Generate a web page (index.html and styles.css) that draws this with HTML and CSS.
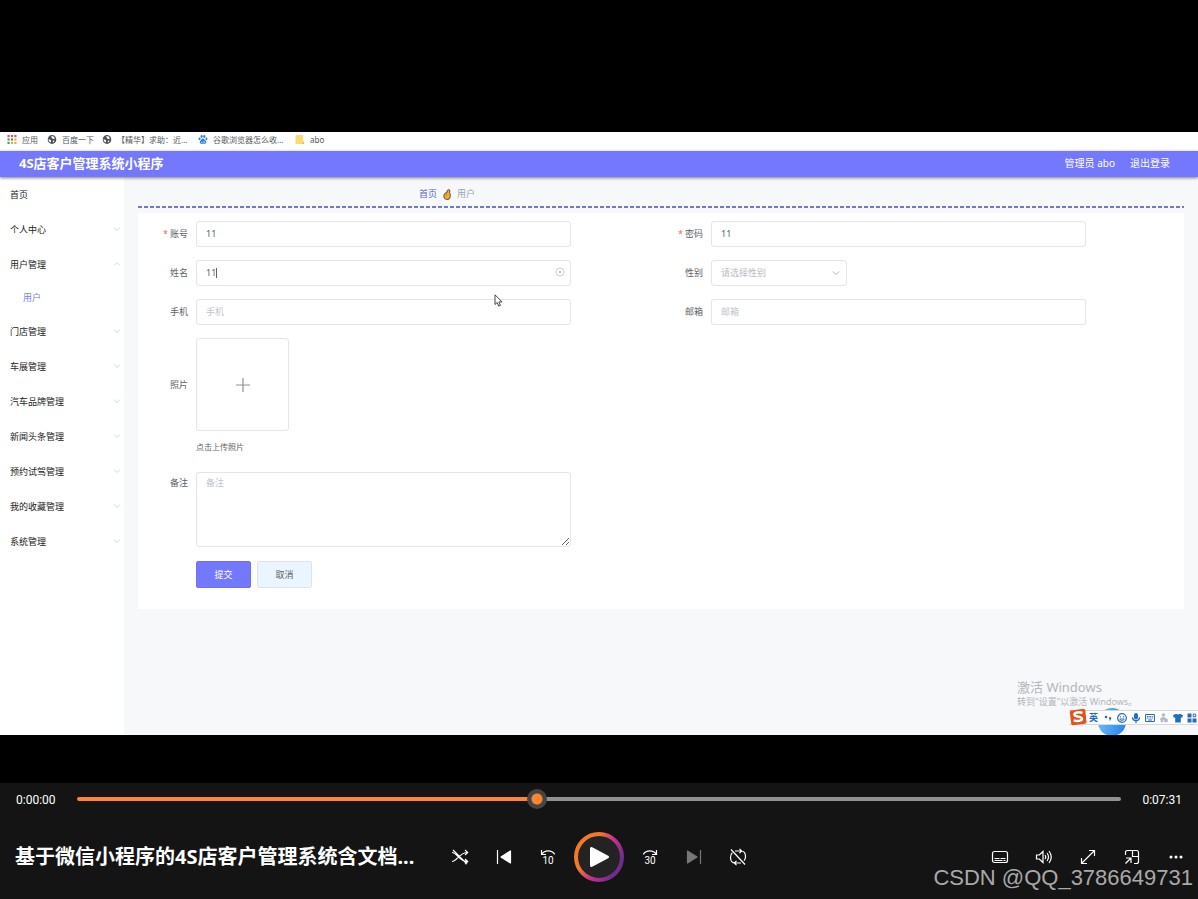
FILE: index.html
```html
<!DOCTYPE html>
<html lang="zh-CN">
<head>
<meta charset="utf-8">
<meta name="viewport" content="width=device-width, initial-scale=1">
<title>4S店客户管理系统小程序</title>
<link rel="stylesheet" href="styles.css">
</head>
<body>
<svg class="defs" width="0" height="0" aria-hidden="true">
  <symbol id="down" viewBox="0 0 8 8"><path d="M1 2.5l3 3 3-3" fill="none" stroke="currentColor"/></symbol>
  <symbol id="up" viewBox="0 0 8 8"><path d="M1 5.5l3-3 3 3" fill="none" stroke="currentColor"/></symbol>
  <symbol id="globe" viewBox="0 0 10 10"><circle cx="5" cy="5" r="4.900" fill="#4d5156"/><path d="M1.200 4.600l2 .8.8 1-.4 1.800C2.200 7.800 1.200 6.500 1.200 4.600zM4 1.500l2.400-.2L8.300 3.600l-1.500.8L5.200 3.800z" fill="#fff"/><path d="M6 6.500l1.800-.4-.5 1.500L6 8.200z" fill="#fff"/></symbol>
</svg>
<main class="stage">
  <div class="screen">
    <nav class="bookmarks" aria-label="书签">
      <a class="mark" href="#"><svg viewBox="0 0 10 10"><g fill="#e25545"><path d="M0 0h2.400v2.400H0zM3.800 0h2.400v2.400H3.800zM7.600 0H10v2.400H7.600z"/></g><path d="M0 3.800h2.400v2.400H0z" fill="#4a9b57"/><path d="M3.800 3.800h2.400v2.400H3.800z" fill="#4a7fd6"/><path d="M7.600 3.800H10v2.400H7.600zM3.800 7.600h2.400V10H3.800zM7.600 7.600H10V10H7.600z" fill="#e6ac37"/><path d="M0 7.600h2.400V10H0z" fill="#4a9b57"/></svg>应用</a>
      <a class="mark" href="#"><svg viewBox="0 0 10 10"><use href="#globe"/></svg>百度一下</a>
      <a class="mark" href="#"><svg viewBox="0 0 10 10"><use href="#globe"/></svg>【精华】求助：近...</a>
      <a class="mark" href="#"><svg viewBox="0 0 10 10" fill="#2f7fe0"><ellipse cx="3.500" cy="1.700" rx="1.200" ry="1.600"/><ellipse cx="6.500" cy="1.700" rx="1.200" ry="1.600"/><ellipse cx="1.200" cy="4.200" rx="1.100" ry="1.500"/><ellipse cx="8.800" cy="4.200" rx="1.100" ry="1.500"/><path d="M5 3.800C3.500 3.800 3.300 5.300 2 6.300 1 7.300 1.300 9.600 3 9.700h4c1.700-.1 2-2.400 1-3.400C6.700 5.300 6.500 3.800 5 3.800z"/><path d="M3.200 7.500h1v1h-1zM5.600 7h1.200v1.500H5.600z" fill="#fff"/></svg>谷歌浏览器怎么收...</a>
      <a class="mark" href="#"><svg viewBox="0 0 10 10"><path d="M0 1q0-1 1-1h7.500v7l1 1v2H0z" fill="#fbd975"/><path d="M8.500 7L7.500 10h2V8z" fill="#e9bd4d"/></svg>abo</a>
    </nav>
    <header class="topbar">
      <h1 class="brand">4S店客户管理系统小程序</h1>
      <span>管理员 abo</span>
      <a class="logout" href="#">退出登录</a>
    </header>
    <div class="workspace">
      <nav class="sidebar" aria-label="菜单">
        <a class="item" href="#">首页</a>
        <a class="item" href="#">个人中心<svg><use href="#down"/></svg></a>
        <a class="item" href="#">用户管理<svg><use href="#up"/></svg></a>
        <a class="item sub" href="#">用户</a>
        <a class="item" href="#">门店管理<svg><use href="#down"/></svg></a>
        <a class="item" href="#">车展管理<svg><use href="#down"/></svg></a>
        <a class="item" href="#">汽车品牌管理<svg><use href="#down"/></svg></a>
        <a class="item" href="#">新闻头条管理<svg><use href="#down"/></svg></a>
        <a class="item" href="#">预约试驾管理<svg><use href="#down"/></svg></a>
        <a class="item" href="#">我的收藏管理<svg><use href="#down"/></svg></a>
        <a class="item" href="#">系统管理<svg><use href="#down"/></svg></a>
      </nav>
      <section class="content">
        <div class="crumbs">
          <a href="#">首页</a>
          <svg viewBox="0 0 10 12"><path d="M5 2L6.500.6l1.700.8-.5 2.300C9 5 8.800 9.500 7.400 10.800c-1.400.9-4.400.7-5.200-.6C1.200 8.500 1.500 5.800 2.800 4.600L5 4z" fill="#f5b02a" stroke="#3d3226" stroke-width=".9"/><path d="M3.300 5.500c1 .2 1.500 1 1.300 2.400" fill="none" stroke="#a8690c" stroke-width=".7"/></svg>
          <span>用户</span>
        </div>
        <form class="card">
          <div class="field"><label class="required" for="account">账号</label><div class="control"><input id="account" type="text" value="11"></div></div>
          <div class="field"><label class="required" for="password">密码</label><div class="control"><input id="password" type="text" value="11"></div></div>
          <div class="field"><label for="name">姓名</label><div class="control"><div class="wrap"><input id="name" type="text" value="11"><i class="caret"></i><svg class="clear" viewBox="0 0 10 10"><circle cx="5" cy="5" r="4" fill="none" stroke="#c0c4cc" stroke-width=".8"/><path d="M4 4l2 2M6 4L4 6" stroke="#b0b4bc" stroke-width=".9"/></svg></div></div></div>
          <div class="field"><label for="gender">性别</label><div class="control"><div class="wrap pick"><select id="gender"><option>请选择性别</option></select><svg class="arrow"><use href="#down"/></svg></div></div></div>
          <div class="field"><label for="phone">手机</label><div class="control"><input id="phone" type="text" placeholder="手机"></div></div>
          <div class="field"><label for="mail">邮箱</label><div class="control"><input id="mail" type="text" placeholder="邮箱"></div></div>
          <div class="field wide photo"><label for="upload">照片</label><div class="control"><button id="upload" class="upload" type="button" aria-label="上传"><svg viewBox="0 0 14 14"><path d="M7 0v14M0 7h14" stroke="#8c939d" stroke-width="1.200"/></svg></button><p class="hint">点击上传照片</p></div></div>
          <div class="field wide note"><label for="note">备注</label><div class="control"><textarea id="note" placeholder="备注"></textarea></div></div>
          <div class="actions"><button class="btn primary" type="button">提交</button><button class="btn" type="button">取消</button></div>
        </form>
      </section>
    </div>
    <svg class="pointer" viewBox="0 0 9 13"><path d="M1 .8v9.700l2.200-2 1.500 3.600 1.700-.7-1.500-3.500H8z" fill="#fff" stroke="#333" stroke-width=".9"/></svg>
    <div class="activate"><p class="big">激活 Windows</p><p>转到"设置"以激活 Windows。</p></div>
    <i class="ball"></i>
    <div class="ime">
      <svg class="sogou" viewBox="0 0 18 18"><path d="M2 2.500L14.500.8q1.500 0 1.800 1.500L17.500 14q0 1.500-1.500 1.800L4 17.300q-1.500 0-1.800-1.500L.8 4.200Q.8 2.800 2 2.500z" fill="#e2551f"/><path d="M13.500 4.800C10 3.800 5.300 4.300 5.300 6.500c0 2.500 7.700 1.700 7.700 4.300 0 2.300-4.800 2.700-8.300 1.500" fill="none" stroke="#fff" stroke-width="2.400"/></svg>
      <b>英</b>
      <svg viewBox="0 0 10 10" fill="#2a6cb5"><circle cx="3" cy="4" r="1.300"/><path d="M6 4.300h2.200c.2 1.800-.3 2.900-1.600 3.400l-.4-.7c.5-.3.700-.6.700-1H6z"/></svg>
      <svg viewBox="0 0 10 10"><circle cx="5" cy="5" r="4.300" fill="none" stroke="#2a6cb5" stroke-width="1.200"/><path d="M3.300 3v1.500M6.700 3v1.500M2.700 6c1 2 3.600 2 4.600 0z" fill="none" stroke="#2a6cb5"/></svg>
      <svg viewBox="0 0 10 10"><rect x="3" y="0" width="4" height="6.500" rx="2" fill="#2a6cb5"/><path d="M1.500 4.300c0 4.300 7 4.300 7 0M5 7.300V10" fill="none" stroke="#2a6cb5" stroke-width="1.300"/></svg>
      <svg viewBox="0 0 10 10"><rect x=".5" y="1.500" width="9" height="7" rx=".8" fill="none" stroke="#2a6cb5" stroke-width="1.200"/><path d="M2 3.500h6M2 5h6" stroke="#2a6cb5" stroke-dasharray="1 .6"/><path d="M3 7h4" stroke="#2a6cb5"/></svg>
      <svg viewBox="0 0 10 10" fill="#b4bcc8"><circle cx="4.500" cy="2" r="1.800"/><path d="M1 7c0-4 6-4 7 0z"/><circle cx="7" cy="7.500" r="2"/><circle cx="3" cy="8" r="1.500"/></svg>
      <svg viewBox="0 0 10 10"><path d="M0 2.300L3 .8q2 1.600 4 0l3 1.500-.9 2.500-1.300-.4V9.500H2.200V4.400l-1.300.4z" fill="#1f6ec0"/></svg>
      <svg viewBox="0 0 10 10" fill="#2a6cb5"><path d="M.5.5H4.500v4h-4zM.5 5.500h4v4h-4zM5.500 5.500h4v4h-4z"/><path d="M6.200 1.200h2.600v2.600H6.200z" fill="none" stroke="#2a6cb5"/></svg>
    </div>
  </div>
</main>
<footer class="player">
  <div class="progress">
    <time>0:00:00</time>
    <input class="seek" type="range" min="0" max="1000" value="439" aria-label="播放进度" style="--played:44%">
    <time class="total">0:07:31</time>
  </div>
  <div class="controls">
    <h2 class="title">基于微信小程序的4S店客户管理系统含文档...</h2>
    <div class="group">
      <button class="tool" aria-label="随机播放"><svg viewBox="0 0 20 20"><path d="M2 5.500c5 0 7 9 15.500 9M2 14.500c5 0 7-9 15.500-9M15 3l2.700 2.500L15 8M15 12l2.700 2.500L15 17M3 3l14 14"/></svg></button>
      <button class="tool" aria-label="上一个"><svg viewBox="0 0 20 20"><path d="M3.500 3v14"/><path d="M16.500 4v12L7 10z" fill="#fff" stroke-linejoin="round"/></svg></button>
      <button class="tool" aria-label="后退 10 秒"><svg viewBox="0 0 20 20"><path d="M3.500 3v4.500H8M3.700 7.300c3-4.500 10-4.500 13 0"/><text x="10" y="17">10</text></svg></button>
      <button class="play" aria-label="播放"><svg viewBox="0 0 50 50"><defs><linearGradient id="ring" x1="0" y1=".2" x2="1" y2=".8"><stop offset=".3" stop-color="#f07a26"/><stop offset=".55" stop-color="#c9328c"/><stop offset=".9" stop-color="#6f2c8c"/></linearGradient></defs><circle cx="25" cy="25" r="23" fill="#232323" stroke="url(#ring)" stroke-width="4"/><path d="M17.500 16.500v17L33.500 25z" fill="#fff" stroke="#fff" stroke-width="3" stroke-linejoin="round"/></svg></button>
      <button class="tool" aria-label="前进 30 秒"><svg viewBox="0 0 20 20"><path d="M16.500 3v4.500H12M16.300 7.300c-3-4.500-10-4.500-13 0"/><text x="10" y="17">30</text></svg></button>
      <button class="tool dim" aria-label="下一个" disabled><svg viewBox="0 0 20 20"><path d="M16.500 3v14"/><path d="M3.500 4v12L13 10z" fill="#777" stroke-linejoin="round"/></svg></button>
      <button class="tool" aria-label="循环"><svg viewBox="0 0 20 20"><path d="M7 4h6c3 0 4.500 2.500 4.500 5.500 0 2-.5 3-1.500 4.200M13 16H7c-3 0-4.500-2.500-4.500-5.500 0-2 .5-3.500 1.800-4.700M11.500 1.800L13.700 4l-2.200 2.200M8.500 13.800L6.300 16l2.200 2.200M3 2.500l14 15"/></svg></button>
    </div>
    <div class="group right">
      <button class="tool" aria-label="字幕"><svg viewBox="0 0 20 20"><rect x="2.500" y="4.500" width="15" height="11" rx="2"/><path d="M4.500 11.500h5M10.500 11.500h5M4.500 13.500h8M13.500 13.500h2"/></svg></button>
      <button class="tool" aria-label="音量"><svg viewBox="0 0 20 20"><path d="M2.500 8v4h2.800L9 15.500v-11L5.300 8zM11 8q1.500 2 0 4M13 6q3 4 0 8M15 4q4.500 6 0 12"/></svg></button>
      <button class="tool" aria-label="全屏"><svg viewBox="0 0 20 20"><path d="M3.500 16.500l13-13M11 3.500h5.500V9M3.500 11v5.500H9"/></svg></button>
      <button class="tool" aria-label="迷你播放"><svg viewBox="0 0 20 20"><path d="M3.500 8V5.500q0-2 2-2h9q2 0 2 2v9q0 2-2 2H12M10.500 3.500v6h6M3.500 16.500L9 11M4 11h5v5"/></svg></button>
      <button class="tool" aria-label="更多"><svg viewBox="0 0 20 20"><g fill="#fff" stroke="none"><circle cx="5" cy="10" r="1.500"/><circle cx="10" cy="10" r="1.500"/><circle cx="15" cy="10" r="1.500"/></g></svg></button>
    </div>
  </div>
  <p class="credit">CSDN @QQ_3786649731</p>
</footer>
</body>
</html>
```
FILE: styles.css
```css
* { box-sizing: border-box; }
body {
  margin: 0;
  min-height: 100vh;
  display: flex;
  flex-direction: column;
  background: #000;
  color: #303133;
  font: 9px/1.5 "Noto Sans", "Noto Sans CJK SC", sans-serif;
}
h1, h2, p { margin: 0; }
a { color: inherit; text-decoration: none; }
button, input, select, textarea { font: inherit; color: inherit; }
.defs { position: absolute; }

.stage { flex: 1; display: flex; padding: 132px 0 48px; }
.screen {
  position: relative;
  flex: 1;
  display: flex;
  flex-direction: column;
  overflow: hidden;
  background: #f6f8fa;
}

.bookmarks {
  display: grid;
  grid-template-columns: 40px 55px 96px 97px auto;
  justify-content: start;
  align-items: center;
  height: 19px;
  padding: 0 7px 4px;
  background: #fff;
  color: #55585c;
  font-size: 8px;
}
.mark { display: flex; align-items: center; gap: 5px; white-space: nowrap; line-height: 15px; }
.mark svg { width: 10px; height: 9px; flex: none; }

.topbar {
  position: relative;
  display: flex;
  align-items: center;
  gap: 15px;
  height: 26px;
  padding: 0 28px 2px 19px;
  background: #7378ff;
  color: #fff;
  font-size: 10px;
  box-shadow: 0 1px 3px rgba(0, 0, 0, .5);
}
.brand { flex: 1; font-size: 13px; line-height: 20px; }

.workspace { flex: 1; display: flex; }
.sidebar { width: 124px; background: #fff; color: #222; }
.item {
  display: flex;
  align-items: center;
  justify-content: space-between;
  height: 35px;
  padding: 0 3px 0 10px;
}
.item svg { width: 8px; height: 8px; margin-bottom: 2px; color: #d3d6da; }
.item.sub { height: 32px; padding-left: 23px; color: #7a7fd8; }

.content { flex: 1; padding: 0 14px; }
.crumbs {
  display: flex;
  align-items: center;
  gap: 5px;
  height: 31px;
  padding: 3px 0 0 281px;
  margin-bottom: 5px;
  color: #99a3b8;
  background: repeating-linear-gradient(90deg, #7377c8 0 4px, transparent 4px 6px) 0 100% / 100% 2px no-repeat;
}
.crumbs a { color: #5b60d6; }
.crumbs svg { width: 10px; height: 11px; }

.card {
  display: grid;
  grid-template-columns: 1fr 1fr;
  row-gap: 13px;
  padding: 8px 16px 21px 0;
  background: #fff;
  color: #606266;
}
.field { display: flex; align-items: flex-start; }
.field label { width: 58px; padding-right: 8px; text-align: right; line-height: 26px; }
.required::before { content: "*"; color: #e06c6c; margin-right: 2px; }
.wide { grid-column: 1; }
.control { flex: 1; }
.control input, .control select, .control textarea {
  display: block;
  width: 82%;
  height: 26px;
  padding: 0 9px 1px;
  border: 1px solid #e3e5e9;
  border-radius: 3px;
  background: #fff;
  outline: 0;
}
.control textarea { height: 75px; padding-top: 3px; }
.control ::placeholder { color: #c0c4cc; opacity: 1; }
.wrap { position: relative; width: 82%; }
.control .wrap input, .control .wrap select { width: 100%; }
.control .pick { width: 136px; }
.control select { appearance: none; color: #b8bcc4; }
.caret { position: absolute; left: 20px; top: 8px; width: 1px; height: 10px; background: #606266; }
.clear { position: absolute; right: 6px; top: 7px; width: 10px; height: 10px; }
.arrow { position: absolute; right: 7px; top: 9px; width: 8px; height: 8px; color: #b0b4bc; }
.photo label { line-height: 93px; }
.note label { line-height: 22px; }
.upload {
  display: grid;
  place-items: center;
  width: 93px;
  height: 93px;
  padding: 0;
  border: 1px solid #e3e5e9;
  border-radius: 3px;
  background: #fff;
}
.upload svg { width: 14px; height: 14px; }
.hint { margin: 8px 0 4px; font-size: 8px; line-height: 16px; }
.actions { grid-column: 1; display: flex; gap: 6px; padding-left: 58px; margin-top: 1px; }
.btn {
  width: 55px;
  height: 27px;
  padding: 0;
  border: 1px solid #dde3ee;
  border-radius: 2px;
  background: #ebf5ff;
}
.btn.primary { background: #7378ff; border-color: #6c71f0; color: #fff; }

.pointer { position: absolute; left: 494px; top: 162px; width: 9px; height: 13px; }
.activate { position: absolute; right: 57px; bottom: 27px; width: 124px; color: #b4b6b9; line-height: 12px; white-space: nowrap; }
.activate .big { font-size: 13px; line-height: 18px; }
.ball {
  position: absolute;
  right: 72px;
  bottom: -1px;
  width: 28px;
  height: 28px;
  border-radius: 50%;
  background: linear-gradient(100deg, #6cc0f8, #2482ea);
}
.ime {
  position: absolute;
  right: 0;
  bottom: 10px;
  display: flex;
  align-items: center;
  gap: 4px;
  height: 15px;
  padding: 0 1px 0 20px;
  border: solid #d5d9df;
  border-width: 1px 0;
  background: linear-gradient(#fff, #fff) 14px 0 no-repeat;
  color: #2a6cb5;
}
.ime svg { width: 10px; height: 10px; }
.ime b { width: 10px; line-height: 13px; }
.ime .sogou { position: absolute; left: 0; top: -3px; width: 18px; height: 18px; }

.player { position: relative; background: #141414; color: #fff; }
.progress {
  display: grid;
  grid-template-columns: 61px 1fr 61px;
  align-items: center;
  height: 32px;
  padding: 0 16px;
  font: 12px/16px Roboto, sans-serif;
}
.progress time { padding-top: 1px; }
.total { text-align: right; }
.seek { appearance: none; width: 100%; height: 20px; margin: 0; background: none; }
.seek::-webkit-slider-runnable-track {
  height: 4px;
  border-radius: 2px;
  background: linear-gradient(90deg, #ff8533 var(--played), #929292 var(--played));
}
.seek::-webkit-slider-thumb {
  appearance: none;
  width: 20px;
  height: 20px;
  margin-top: -8px;
  border-radius: 50%;
  background: radial-gradient(circle, #ff8533 5px, #454545 6px);
}
.controls {
  display: grid;
  grid-template-columns: 1fr auto 1fr;
  align-items: center;
  height: 84px;
}
.title { padding-left: 15px; font-size: 20px; line-height: 30px; white-space: nowrap; }
.group { display: flex; align-items: center; }
.right { justify-content: flex-end; }
.tool { display: grid; place-items: center; width: 44px; height: 44px; padding: 0; border: 0; background: none; }
.tool svg { width: 20px; height: 20px; fill: none; stroke: #fff; stroke-width: 1.2; }
.tool text { fill: #fff; stroke: none; font: 10px Roboto, sans-serif; text-anchor: middle; }
.dim svg { stroke: #777; }
.play { width: 50px; height: 50px; margin: 0 4px; padding: 0; border: 0; background: none; }
.play svg { display: block; }
.credit {
  position: absolute;
  right: 5px;
  bottom: 4px;
  color: #a9a9a9;
  font: 22px/34px "Liberation Sans", sans-serif;
  pointer-events: none;
}
```
